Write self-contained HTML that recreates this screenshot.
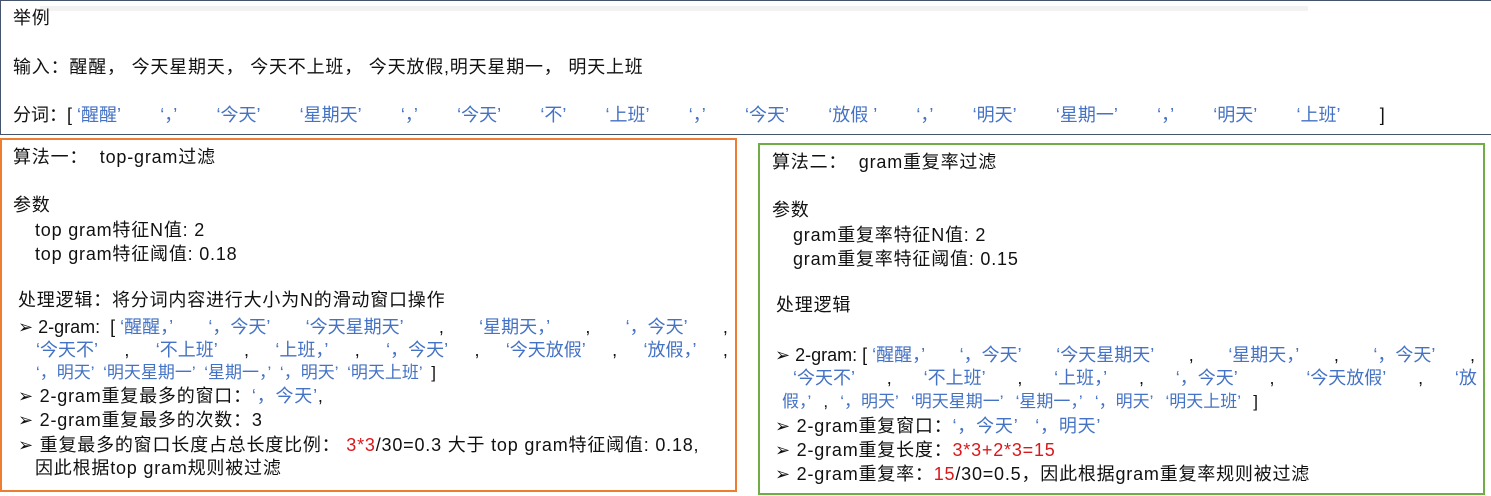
<!DOCTYPE html>
<html><head><meta charset="utf-8"><style>
html,body{margin:0;padding:0;background:#fff;width:1491px;height:496px;overflow:hidden;position:relative;
font-family:"Liberation Sans","Noto Sans CJK SC",sans-serif;font-size:18px;letter-spacing:0.8px;color:#111;}
.l{position:absolute;white-space:pre;line-height:20px;}
.f{position:absolute;display:flex;justify-content:space-between;white-space:pre;line-height:20px;letter-spacing:0;}
.b{color:#4472c4}.r{color:#d9181b}
.box{position:absolute;box-sizing:border-box}
</style></head><body>
<div class="box" style="left:0;top:0;width:1491px;height:135px;border:1.5px solid #44546a;border-right:none"></div>
<div class="box" style="left:40px;top:6px;width:1268px;height:5px;background:#f2f2f2"></div>
<div class="box" style="left:0;top:138px;width:737px;height:354px;border:2px solid #ed7d31"></div>
<div class="box" style="left:758px;top:143px;width:727px;height:352px;border:2px solid #70ad47"></div>

<div class="l" style="left:13px;top:8px">举例</div>
<div class="l" style="left:13px;top:57px">输入：醒醒， 今天星期天， 今天不上班， 今天放假,明天星期一， 明天上班</div>
<div class="f" style="left:13px;top:105px;width:1372px"><span>分词：[ <span class="b">‘醒醒’</span></span><span class="b">‘，’</span><span class="b">‘今天’</span><span class="b">‘星期天’</span><span class="b">‘，’</span><span class="b">‘今天’</span><span class="b">‘不’</span><span class="b">‘上班’</span><span class="b">‘，’</span><span class="b">‘今天’</span><span class="b">‘放假 ’</span><span class="b">‘，’</span><span class="b">‘明天’</span><span class="b">‘星期一’</span><span class="b">‘，’</span><span class="b">‘明天’</span><span class="b">‘上班’</span><span>]</span></div>

<div class="l" style="left:13px;top:147px">算法一：  top-gram过滤</div>
<div class="l" style="left:13px;top:195px">参数</div>
<div class="l" style="left:35px;top:220px">top gram特征N值: 2</div>
<div class="l" style="left:35px;top:244px">top gram特征阈值: 0.18</div>
<div class="l" style="left:18px;top:290px">处理逻辑：将分词内容进行大小为N的滑动窗口操作</div>
<div class="f" style="left:18px;top:317px;width:710px"><span>➢ 2-gram:  [ <span class="b">‘醒醒，’</span></span><span class="b">‘，今天’</span><span class="b">‘今天星期天’</span><span>,</span><span class="b">‘星期天，’</span><span>,</span><span class="b">‘，今天’</span><span>,</span></div>
<div class="f" style="left:36px;top:340px;width:692px"><span class="b">‘今天不’</span><span>,</span><span class="b">‘不上班’</span><span>,</span><span class="b">‘上班，’</span><span>,</span><span class="b">‘，今天’</span><span>,</span><span class="b">‘今天放假’</span><span>,</span><span class="b">‘放假，’</span><span>,</span></div>
<div class="f" style="left:36px;top:363px;width:400px;font-size:17px"><span class="b">‘，明天’</span><span class="b">‘明天星期一’</span><span class="b">‘星期一，’</span><span class="b">‘，明天’</span><span class="b">‘明天上班’</span><span>]</span></div>
<div class="l" style="left:18px;top:386px">➢ 2-gram重复最多的窗口：<span class="b">‘，今天’</span>,</div>
<div class="l" style="left:18px;top:410px">➢ 2-gram重复最多的次数：3</div>
<div class="l" style="left:18px;top:435px">➢ 重复最多的窗口长度占总长度比例： <span class="r">3*3</span>/30=0.3 大于 top gram特征阈值: 0.18,</div>
<div class="l" style="left:35px;top:458px">因此根据top gram规则被过滤</div>

<div class="l" style="left:772px;top:152px">算法二：  gram重复率过滤</div>
<div class="l" style="left:772px;top:200px">参数</div>
<div class="l" style="left:793px;top:225px">gram重复率特征N值: 2</div>
<div class="l" style="left:793px;top:249px">gram重复率特征阈值: 0.15</div>
<div class="l" style="left:776px;top:295px">处理逻辑</div>
<div class="f" style="left:775px;top:345px;width:700px"><span>➢ 2-gram: [ <span class="b">‘醒醒，’</span></span><span class="b">‘，今天’</span><span class="b">‘今天星期天’</span><span>,</span><span class="b">‘星期天，’</span><span>,</span><span class="b">‘，今天’</span><span>,</span></div>
<div class="f" style="left:793px;top:368px;width:684px"><span class="b">‘今天不’</span><span>,</span><span class="b">‘不上班’</span><span>,</span><span class="b">‘上班，’</span><span>,</span><span class="b">‘，今天’</span><span>,</span><span class="b">‘今天放假’</span><span>,</span><span class="b">‘放</span></div>
<div class="f" style="left:782px;top:392px;width:476px;font-size:17px"><span class="b">假，’</span><span>,</span><span class="b">‘，明天’</span><span class="b">‘明天星期一’</span><span class="b">‘星期一，’</span><span class="b">‘，明天’</span><span class="b">‘明天上班’</span><span>]</span></div>
<div class="l" style="left:775px;top:416px">➢ 2-gram重复窗口：<span class="b">‘，今天’   ‘，明天’</span></div>
<div class="l" style="left:775px;top:440px">➢ 2-gram重复长度：<span class="r">3*3+2*3=15</span></div>
<div class="l" style="left:775px;top:464px">➢ 2-gram重复率：<span class="r">15</span>/30=0.5，因此根据gram重复率规则被过滤</div>
</body></html>
